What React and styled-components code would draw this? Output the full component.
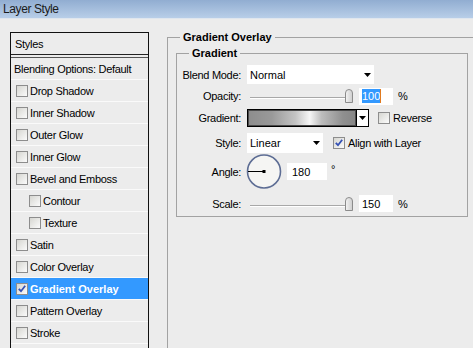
import React from 'react';
import styled, { createGlobalStyle } from 'styled-components';

const GlobalStyle = createGlobalStyle`
  html, body {
    margin: 0;
    padding: 0;
  }
  body {
    width: 473px;
    height: 348px;
    overflow: hidden;
    background: #ececec;
    font-family: "Liberation Sans", Arial, sans-serif;
    font-size: 11px;
    color: #000;
  }
`;

const effects = [
  { name: 'Drop Shadow' },
  { name: 'Inner Shadow' },
  { name: 'Outer Glow' },
  { name: 'Inner Glow' },
  { name: 'Bevel and Emboss' },
  { name: 'Contour', nested: true },
  { name: 'Texture', nested: true },
  { name: 'Satin' },
  { name: 'Color Overlay' },
  { name: 'Gradient Overlay', checked: true, selected: true },
  { name: 'Pattern Overlay' },
  { name: 'Stroke' },
  { name: '' },
];

const Window = styled.div`
  width: 473px;
  height: 348px;
  overflow: hidden;
  display: flex;
  flex-direction: column;
`;

const TitleBar = styled.div`
  height: 18px;
  flex: none;
  padding-left: 3px;
  display: flex;
  align-items: center;
  background: linear-gradient(#91add1, #b8cee8);
  border-bottom: 1px solid #dfe6ee;
  font-size: 12px;
  letter-spacing: -0.4px;
  color: #1b1b1b;
`;

const Body = styled.div`
  display: flex;
  align-items: flex-start;
  padding: 13px 0 0 10px;
`;

// left list
const StylesPanel = styled.div`
  width: 139px;
  height: 340px;
  flex: none;
  box-sizing: border-box;
  border: 1px solid #111;
  letter-spacing: -0.3px;
`;

const PanelHeader = styled.div`
  height: 21px;
  padding-left: 4px;
  display: flex;
  align-items: center;
  border-bottom: 1px solid #222;
  margin-bottom: 2px;
`;

const BlendingRow = styled.div`
  height: 21px;
  padding-left: 3px;
  display: flex;
  align-items: center;
  border-top: 1px solid #555;
  border-bottom: 1px solid #fafafa;
`;

const EffectRow = styled.div`
  height: 21px;
  display: flex;
  align-items: center;
  gap: 2px;
  padding-left: ${p => (p.$nested ? 18 : 5)}px;
  border-bottom: 1px solid #fafafa;
  background: ${p => (p.$selected ? '#3399ff' : 'transparent')};
  color: ${p => (p.$selected ? '#fff' : '#000')};
  font-weight: ${p => (p.$selected ? 'bold' : 'normal')};
  letter-spacing: ${p => (p.$selected ? '0' : '-0.3px')};
`;

const Box = styled.span`
  width: 12px;
  height: 12px;
  flex: none;
  box-sizing: border-box;
  border: 1px solid #8d8d8d;
  background: linear-gradient(135deg, #d6d6d1, #fbfbfb);
  display: inline-flex;
  align-items: center;
  justify-content: center;
  margin-left: ${p => p.$ml || 0}px;
`;

function Checkbox({ checked, ml }) {
  return (
    <Box $ml={ml}>
      {checked && (
        <svg width="8" height="8" viewBox="0 0 8 8">
          <path d="M0.8 3.8 L3 6.2 L7.2 0.8" fill="none" stroke="#3450b4" strokeWidth="1.8" />
        </svg>
      )}
    </Box>
  );
}

// right side groups
const OuterGroup = styled.fieldset`
  flex: 1;
  min-width: 0;
  height: 330px;
  box-sizing: border-box;
  margin: -2px 0 0 18px;
  padding: 2px 0 0 8px;
  border: 1px solid #a2a2a2;
  border-right: none;
  border-bottom: none;
`;

const GroupTitle = styled.legend`
  font-weight: bold;
  line-height: 14px;
  padding: 0 3px;
  margin-left: ${p => p.$indent}px;
`;

const InnerGroup = styled.fieldset`
  width: 292px;
  box-sizing: border-box;
  margin: 0;
  padding: 5px 0 3px 0;
  border: 1px solid #a2a2a2;
`;

const Rows = styled.div`
  display: flex;
  flex-direction: column;
`;

const Row = styled.div`
  display: flex;
  align-items: center;
  height: ${p => p.$h}px;
  margin-top: ${p => p.$mt || 0}px;
`;

const Label = styled.div`
  width: 64px;
  flex: none;
  margin-right: 6px;
  text-align: right;
  letter-spacing: -0.3px;
`;

const Select = styled.div`
  width: ${p => p.$w}px;
  height: ${p => p.$h}px;
  box-sizing: border-box;
  background: #fff;
  display: flex;
  align-items: center;
  justify-content: space-between;
  padding: 0 3px 0 3px;
`;

const Slider = styled.div`
  width: 103px;
  height: 14px;
  margin-left: 3px;
  display: flex;
  align-items: flex-end;
`;

const Track = styled.div`
  flex: 1;
  height: 0;
  border-top: 1px solid #a8a8a8;
  border-bottom: 1px solid #fff;
  margin-bottom: 4px;
`;

const NumberField = styled.div`
  width: ${p => p.$w}px;
  height: 17px;
  box-sizing: border-box;
  background: #fff;
  display: flex;
  align-items: center;
  padding-left: ${p => p.$pl || 3}px;
  margin-left: ${p => p.$ml}px;
`;

const SelectedText = styled.span`
  background: #3399ff;
  color: #fff;
  line-height: 14px;
`;

const Caret = styled.span`
  width: 1px;
  height: 14px;
  background: #e07a1f;
`;

const Unit = styled.span`
  margin-left: ${p => p.$ml}px;
  align-self: ${p => (p.$top ? 'flex-start' : 'auto')};
  margin-top: ${p => (p.$top ? 9 : 0)}px;
`;

const Swatch = styled.div`
  width: 110px;
  height: 18px;
  box-sizing: border-box;
  border: 1px solid #000;
  box-shadow: inset 0 0 0 1px #4a4a4a;
  background: linear-gradient(to right, #8d8d8d 0%, #999 22%, #c4c4c4 44%, #f6f6f6 57%, #bdbdbd 68%, #8f8f8f 88%, #868686 100%);
`;

const DropButton = styled.div`
  width: 12px;
  height: 18px;
  box-sizing: border-box;
  border: 1px solid #000;
  border-left: none;
  background: #fff;
  display: flex;
  align-items: center;
  justify-content: center;
`;

const CheckLabel = styled.span`
  margin-left: ${p => p.$ml}px;
  letter-spacing: -0.3px;
`;

const Arrow = () => (
  <svg width="7" height="4" viewBox="0 0 7 4">
    <path d="M0 0 H7 L3.5 4 Z" fill="#000" />
  </svg>
);

const Thumb = () => (
  <svg width="8" height="14" viewBox="0 0 8 14">
    <defs>
      <linearGradient id="thumbFill" x1="0" y1="0" x2="1" y2="0">
        <stop offset="0" stopColor="#f4f4f4" />
        <stop offset="1" stopColor="#cdcdcd" />
      </linearGradient>
    </defs>
    <path d="M0.5 13.5 V4 Q0.5 0.5 4 0.5 Q7.5 0.5 7.5 4 V13.5 Z" fill="url(#thumbFill)" stroke="#8b8b8b" />
  </svg>
);

const Dial = () => (
  <svg width="36" height="35" viewBox="0 0 36 35" style={{ marginLeft: -1 }}>
    <circle cx="18" cy="17.5" r="16.5" fill="#f5f5f3" stroke="#5d6d94" strokeWidth="1.6" />
    <line x1="2" y1="17.5" x2="18" y2="17.5" stroke="#000" strokeWidth="1" />
    <rect x="16.5" y="16" width="3" height="3" fill="#000" />
  </svg>
);

export default function App() {
  return (
    <>
      <GlobalStyle />
      <Window>
        <TitleBar>Layer Style</TitleBar>
        <Body>
          <StylesPanel>
            <PanelHeader>Styles</PanelHeader>
            <BlendingRow>Blending Options: Default</BlendingRow>
            {effects.map((e, i) => (
              <EffectRow key={i} $nested={e.nested} $selected={e.selected}>
                {e.name && <Checkbox checked={e.checked} />}
                {e.name}
              </EffectRow>
            ))}
          </StylesPanel>

          <OuterGroup>
            <GroupTitle $indent={4}>Gradient Overlay</GroupTitle>
            <InnerGroup>
              <GroupTitle $indent={12}>Gradient</GroupTitle>
              <Rows>
                <Row $h={19}>
                  <Label>Blend Mode:</Label>
                  <Select $w={127} $h={19}>
                    Normal
                    <Arrow />
                  </Select>
                </Row>
                <Row $h={18} $mt={3}>
                  <Label>Opacity:</Label>
                  <Slider>
                    <Track />
                    <Thumb />
                  </Slider>
                  <NumberField $w={34} $ml={6}>
                    <SelectedText>100</SelectedText>
                    <Caret />
                  </NumberField>
                  <Unit $ml={5}>%</Unit>
                </Row>
                <Row $h={18} $mt={4}>
                  <Label>Gradient:</Label>
                  <Swatch />
                  <DropButton>
                    <Arrow />
                  </DropButton>
                  <Checkbox ml={9} />
                  <CheckLabel $ml={3}>Reverse</CheckLabel>
                </Row>
                <Row $h={20} $mt={6}>
                  <Label>Style:</Label>
                  <Select $w={76} $h={20}>
                    Linear
                    <Arrow />
                  </Select>
                  <Checkbox checked ml={10} />
                  <CheckLabel $ml={3}>Align with Layer</CheckLabel>
                </Row>
                <Row $h={35} $mt={1}>
                  <Label>Angle:</Label>
                  <Dial />
                  <NumberField $w={40} $ml={5} $pl={5}>180</NumberField>
                  <Unit $ml={4} $top>°</Unit>
                </Row>
                <Row $h={19} $mt={5}>
                  <Label>Scale:</Label>
                  <Slider>
                    <Track />
                    <Thumb />
                  </Slider>
                  <NumberField $w={34} $ml={6}>150</NumberField>
                  <Unit $ml={5}>%</Unit>
                </Row>
              </Rows>
            </InnerGroup>
          </OuterGroup>
        </Body>
      </Window>
    </>
  );
}
